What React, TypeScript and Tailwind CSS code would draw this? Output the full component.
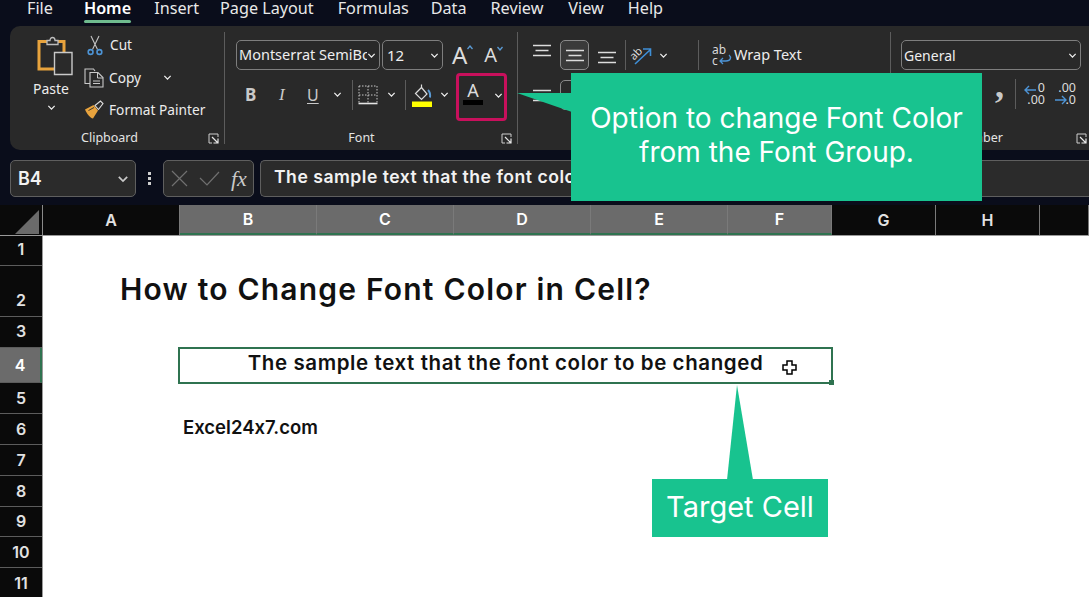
import React from "react";

const uiFont = { fontFamily: '"Noto Sans", "Open Sans", sans-serif' };

const Chevron = ({ size = 9, color = "#efefef" }: { size?: number; color?: string }) => (
  <svg width={size} height={size} viewBox="0 0 10 10" fill="none" className="shrink-0">
    <path d="M1.5 3.2 L5 6.8 L8.5 3.2" stroke={color} strokeWidth="1.4" />
  </svg>
);

const Launcher = () => (
  <svg width="11" height="11" viewBox="0 0 11 11" fill="none" className="shrink-0">
    <path d="M10 4V1H1V10H4" stroke="#cfcfcf" strokeWidth="1" />
    <path d="M4 4L9.5 9.5M5.5 10H10V5.5" stroke="#e8e8e8" strokeWidth="1.2" />
  </svg>
);

const PasteIcon = () => (
  <svg width="36" height="40" viewBox="0 0 36 40" fill="none">
    <path d="M2 5.5H27V33H2Z" stroke="#e8a33d" strokeWidth="3" fill="none" />
    <path d="M10 6.5V4.5H13C13 0.5 18 0.5 18 4.5H21V8.5H10Z" fill="#2a2a2a" stroke="#bdbdbd" strokeWidth="1.3" />
    <path d="M17.5 16.5H35V38.5H17.5Z" fill="#2a2a2a" stroke="#c9c9c9" strokeWidth="1.4" />
  </svg>
);

const CutIcon = () => (
  <svg width="16" height="21" viewBox="0 0 16 21" fill="none">
    <path d="M4 1L10.5 14.5M12 1L5.5 14.5" stroke="#c4c4c4" strokeWidth="1.1" />
    <circle cx="3.6" cy="17" r="2.4" stroke="#4d94d6" strokeWidth="1.6" />
    <circle cx="12.4" cy="17" r="2.4" stroke="#4d94d6" strokeWidth="1.6" />
  </svg>
);

const CopyIcon = () => (
  <svg width="20" height="20" viewBox="0 0 20 20" fill="none">
    <path d="M6 15.5H1V1H9.5L11 3" stroke="#c9c9c9" strokeWidth="1.1" />
    <path d="M6 4.5H14L19 9.5V19H6Z" stroke="#c9c9c9" strokeWidth="1.1" />
    <path d="M13.5 4.5V10H19M9 13H16M9 15.5H16" stroke="#c9c9c9" strokeWidth="1" />
  </svg>
);

const PainterIcon = () => (
  <svg width="20" height="20" viewBox="0 0 20 20" fill="none">
    <path d="M1 9.5L9.5 5L14 10.5L9 18.5C6 18 3 14 1 9.5Z" fill="#e8a33d" />
    <path d="M4.5 10.5L10 7.5" stroke="#2a2a2a" strokeWidth="0.9" />
    <path d="M11 5.5L16.5 1L19 3.5L14.5 9.5Z" fill="#2a2a2a" stroke="#dcdcdc" strokeWidth="1.1" />
  </svg>
);

const FillIcon = () => (
  <svg width="20" height="24" viewBox="0 0 20 24" fill="none">
    <path d="M3.5 10.5L9.5 4.5L15 11L9.5 16.5Z" stroke="#dcdcdc" strokeWidth="1.2" />
    <path d="M9.5 4.5V1.5" stroke="#dcdcdc" strokeWidth="1.2" />
    <path d="M16 7C18 9 18.5 11 18 14.5" stroke="#5b9bd5" strokeWidth="2" />
    <rect x="0" y="18.5" width="20" height="5.5" fill="#ffff00" />
  </svg>
);

const BordersIcon = () => (
  <svg width="20" height="20" viewBox="0 0 20 20" fill="none">
    <path d="M1 1H19M1 1V19M19 1V19M10 1V19M1 10H19" stroke="#c9c9c9" strokeWidth="1" strokeDasharray="1.5 1.5" />
    <path d="M0.5 18.5H19.5" stroke="#e4e4e4" strokeWidth="1.6" />
  </svg>
);

const LinesIcon = () => (
  <svg width="20" height="13" viewBox="0 0 20 13" fill="none">
    <path d="M1 1.5H19M3.5 6.5H16.5M1 11.5H19" stroke="#dcdcdc" strokeWidth="1.3" />
  </svg>
);

const OrientationIcon = () => (
  <svg width="22" height="22" viewBox="0 0 22 22" fill="none">
    <path d="M5 20L20 6M13 5H20.5V12" stroke="#3f8fd6" strokeWidth="1.6" />
    <text x="-1" y="13" fontSize="11" fill="#dcdcdc" transform="rotate(-45 6 9)" fontFamily="Noto Sans, sans-serif">ab</text>
  </svg>
);

const WrapIcon = () => (
  <svg width="20" height="22" viewBox="0 0 20 22" fill="none">
    <text x="0" y="10" fontSize="12" fill="#d8d8d8" fontFamily="Noto Sans, sans-serif">ab</text>
    <text x="0" y="21" fontSize="12" fill="#d8d8d8" fontFamily="Noto Sans, sans-serif">c</text>
    <path d="M17 11C19.5 13 19 17 14 17H8M11 14L8 17L11 20" stroke="#4d94d6" strokeWidth="1.3" />
  </svg>
);

const DecimalIcon = ({ up }: { up?: boolean }) => (
  <div className="relative flex h-[26px] w-[21px] flex-col items-end justify-center text-[12.5px] leading-[12px] text-[#dcdcdc]">
    <span>{up ? "0" : ".00"}</span>
    <span>{up ? ".00" : ".0"}</span>
    <svg width="12" height="10" viewBox="0 0 12 10" fill="none" className={`absolute ${up ? "left-0 top-[4px]" : "left-0 top-[14px]"}`}>
      <path d={up ? "M12 5H1M5 1L1 5L5 9" : "M0 5H11M7 1L11 5L7 9"} stroke="#4d94d6" strokeWidth="1.4" />
    </svg>
  </div>
);

const GroupLabel = ({ label, className }: { label: string; className: string }) => (
  <div className={`relative mt-auto flex h-[12px] items-center justify-center text-[12.5px] text-[#e4e4e4] ${className}`}>
    {label}
    <span className="absolute bottom-0 right-[-1px] flex"><Launcher /></span>
  </div>
);

const Select = ({ value, className }: { value: string; className: string }) => (
  <div className={`flex h-[30px] items-center overflow-hidden rounded-[5px] border border-[#7e7e7e] pl-[2px] pr-[3px] text-[#eeeeee] ${className}`}>
    <span className="flex-1 overflow-hidden whitespace-nowrap">{value}</span>
    <Chevron />
  </div>
);

const menu = [
  { label: "File", ml: "ml-[27px]" },
  { label: "Home", ml: "ml-[31px]", active: true },
  { label: "Insert", ml: "ml-[23px]" },
  { label: "Page Layout", ml: "ml-[21px]" },
  { label: "Formulas", ml: "ml-[24px]" },
  { label: "Data", ml: "ml-[22px]" },
  { label: "Review", ml: "ml-[24px]" },
  { label: "View", ml: "ml-[25px]" },
  { label: "Help", ml: "ml-[24px]" },
];

const columns = [
  { name: "A", w: "w-[137px]" },
  { name: "B", w: "w-[137px]", sel: true },
  { name: "C", w: "w-[137px]", sel: true },
  { name: "D", w: "w-[137px]", sel: true },
  { name: "E", w: "w-[137px]", sel: true },
  { name: "F", w: "w-[104px]", sel: true },
  { name: "G", w: "w-[104px]" },
  { name: "H", w: "w-[104px]" },
  { name: "", w: "w-[49px]" },
];

const rows = [
  { n: 1, h: "h-[30px] items-center pb-[3px]" },
  { n: 2, h: "h-[51px] items-end pb-[4px]" },
  { n: 3, h: "h-[31px] items-center pb-[2px]" },
  { n: 4, h: "h-[35px] items-center" },
  { n: 5, h: "h-[31px] items-center pb-[1px]" },
  { n: 6, h: "h-[31px] items-center pb-[1px]" },
  { n: 7, h: "h-[31px] items-center pb-[1px]" },
  { n: 8, h: "h-[31px] items-center pb-[1px]" },
  { n: 9, h: "h-[30px] items-center pb-[1px]" },
  { n: 10, h: "h-[31px] items-center pb-[1px]" },
  { n: 11, h: "h-[31px] items-center pb-[1px]" },
];

const sheetFont = { fontFamily: 'Inter, "Noto Sans", sans-serif' };

export default function App() {
  return (
    <div className="relative h-[597px] w-[1089px] overflow-hidden bg-[#0a0d1b]" style={uiFont}>
      {/* menu tabs */}
      <div className="flex h-[26px] items-start text-[16.2px] leading-[17px] text-[#e8e8e8]">
        {menu.map((m) => (
          <div key={m.label} className={`${m.ml} flex flex-col items-stretch whitespace-nowrap`}>
            <span className={m.active ? "font-semibold text-white" : ""}>{m.label}</span>
            {m.active && <span className="mt-[3px] h-[3px] rounded-sm bg-[#6fbb8e]" />}
          </div>
        ))}
      </div>

      {/* ribbon */}
      <div className="ml-[10px] flex h-[124px] rounded-l-[10px] bg-[#292929] text-[#ececec]">
        <div className="my-[6px] flex w-[215px] flex-col border-r border-[#5c5c5c] pr-[6px]">
          <div className="flex">
            <div className="ml-[27px] mt-[4px] flex w-[36px] flex-col items-start">
              <PasteIcon />
              <span className="ml-[-4px] mt-[4px] text-[14px] leading-[18px]">Paste</span>
              <span className="ml-[10px] mt-[5px]"><Chevron /></span>
            </div>
            <div className="ml-[11px] flex flex-col gap-[10.5px] pt-[2px] text-[13.7px] leading-[22px]">
              <div className="ml-[3px] flex items-center gap-[7px]"><CutIcon />Cut</div>
              <div className="flex items-center gap-[5px]"><CopyIcon />Copy<span className="ml-[17px]"><Chevron /></span></div>
              <div className="flex items-center gap-[5px]"><PainterIcon />Format Painter</div>
            </div>
          </div>
          <GroupLabel label="Clipboard" className="pr-[9px]" />
        </div>

        <div className="my-[6px] flex w-[293px] flex-col border-r border-[#5c5c5c] pl-[11px] pr-[6px]">
          <div className="mt-[8px] flex items-center">
            <Select value="Montserrat SemiBold" className="w-[144px] text-[14.5px]" />
            <Select value="12" className="ml-[2px] w-[61px] pl-[4px] text-[15px]" />
            <span className="ml-[9px] flex items-start text-[24px] leading-[28px] text-[#dcdcdc]">
              A
              <svg width="6" height="5" viewBox="0 0 6 5" fill="none" className="mt-[4px]"><path d="M0.5 4L3 1L5.5 4" stroke="#5b9bd5" strokeWidth="1.3" /></svg>
            </span>
            <span className="ml-[11px] flex items-start text-[20px] leading-[28px] text-[#dcdcdc]">
              A
              <svg width="6" height="5" viewBox="0 0 6 5" fill="none" className="mt-[5px]"><path d="M0.5 1L3 4L5.5 1" stroke="#5b9bd5" strokeWidth="1.3" /></svg>
            </span>
          </div>
          <div className="mt-[3px] flex h-[48px] items-center pb-[5px] text-[#c9c9c9]">
            <span className="ml-[9px] w-[10px] text-[17px] font-bold">B</span>
            <span className="ml-[24px] w-[8px] text-[17px] italic" style={{ fontFamily: '"Liberation Serif", serif' }}>I</span>
            <span className="ml-[20px] w-[12px] text-[16px] underline underline-offset-2">U</span>
            <span className="ml-[14px]"><Chevron /></span>
            <span className="ml-[10px] h-[30px] w-px bg-[#5c5c5c]" />
            <span className="ml-[5px]"><BordersIcon /></span>
            <span className="ml-[9px]"><Chevron /></span>
            <span className="ml-[9px] h-[30px] w-px bg-[#5c5c5c]" />
            <span className="ml-[6px]"><FillIcon /></span>
            <span className="ml-[8px]"><Chevron /></span>
            <div className="ml-[7px] flex h-[48px] w-[51px] shrink-0 items-center self-start rounded-[4px] border-[3px] border-[#c8105c] pl-[4px]">
              <div className="mb-[8px] flex w-[20px] flex-col items-center">
                <span className="text-[18px] leading-[19px] text-[#dcdcdc]">A</span>
                <span className="h-[5px] w-[20px] bg-black" />
              </div>
              <span className="mb-[4px] ml-[11px]"><Chevron /></span>
            </div>
          </div>
          <GroupLabel label="Font" className="pr-[24px]" />
        </div>

        <div className="my-[6px] flex w-[373px] flex-col border-r border-[#5c5c5c] pl-[14px]">
          <div className="mt-[8px] flex h-[30px] items-center">
            <span className="mt-[-10px]"><LinesIcon /></span>
            <span className="ml-[8px] flex h-[30px] w-[29px] items-center justify-center rounded-[5px] border border-[#8a8a8a] bg-[#3a3a3a]"><LinesIcon /></span>
            <span className="ml-[8px] mt-[4px]"><LinesIcon /></span>
            <span className="ml-[8px] h-[30px] w-px bg-[#5c5c5c]" />
            <span className="ml-[4px]"><OrientationIcon /></span>
            <span className="ml-[7px]"><Chevron /></span>
            <span className="ml-[30px] h-[30px] w-px bg-[#5c5c5c]" />
            <span className="ml-[13px]"><WrapIcon /></span>
            <span className="ml-[2px] text-[14.5px]">Wrap Text</span>
          </div>
          <div className="mt-[10px] flex h-[30px] items-center">
            <LinesIcon />
            <span className="ml-[8px] h-[30px] w-[29px] rounded-[5px] border border-[#8a8a8a]" />
          </div>
        </div>

        <div className="my-[6px] flex flex-1 flex-col pl-[10px] pr-[3px]">
          <div className="mt-[8px]">
            <Select value="General" className="w-[180px] text-[14px]" />
          </div>
          <div className="mt-[6px] flex h-[36px] items-center justify-end pr-[10px]">
            <span className="mb-[18px] text-[36px] font-bold leading-[30px] text-[#c9c9c9]" style={{ fontFamily: '"Liberation Serif", serif' }}>,</span>
            <span className="ml-[11px] h-[30px] w-px bg-[#5c5c5c]" />
            <span className="ml-[8px]"><DecimalIcon up /></span>
            <span className="ml-[10px]"><DecimalIcon /></span>
          </div>
          <GroupLabel label="Number" className="pr-[30px]" />
        </div>
      </div>

      {/* formula bar */}
      <div className="mt-[10px] flex h-[37px] items-stretch" style={sheetFont}>
        <div className="ml-[10px] flex w-[126px] items-center justify-between rounded-[5px] border border-[#5f5f5f] bg-[#2b2b2b] pl-[7px] pr-[6px] text-[18px] font-semibold text-[#f2f2f2]">
          B4
          <Chevron size={12} color="#c9c9c9" />
        </div>
        <div className="ml-[11px] flex w-[5px] flex-col items-center justify-center gap-[2px]">
          <span className="h-[3px] w-[3px] bg-[#cfcfcf]" />
          <span className="h-[3px] w-[3px] bg-[#cfcfcf]" />
          <span className="h-[3px] w-[3px] bg-[#cfcfcf]" />
        </div>
        <div className="ml-[11px] flex w-[91px] items-center rounded-[5px] border border-[#5f5f5f] bg-[#2b2b2b] pl-[7px]">
          <svg width="17" height="17" viewBox="0 0 17 17" fill="none"><path d="M1 1L16 16M16 1L1 16" stroke="#707070" strokeWidth="1.2" /></svg>
          <svg width="21" height="17" viewBox="0 0 21 17" fill="none" className="ml-[11px]"><path d="M1 8L8 15L20 2" stroke="#707070" strokeWidth="1.2" /></svg>
          <span className="ml-[11px] text-[22px] italic text-[#c9c9c9]" style={{ fontFamily: '"Liberation Serif", serif' }}>fx</span>
        </div>
        <div className="ml-[6px] flex flex-1 items-center overflow-hidden whitespace-nowrap rounded-l-[5px] border-y border-l border-[#5f5f5f] bg-[#2b2b2b] pb-[2px] pl-[13px] text-[17.6px] font-semibold tracking-[0.5px] text-[#f2f2f2]">
          The sample text that the font color to be changed
        </div>
      </div>

      {/* column headers */}
      <div className="mt-[8px] flex h-[31px] border-b border-[#9a9a9a] bg-[#0a0a0a] text-[16px] font-semibold text-[#e2e2e2]" style={sheetFont}>
        <div className="flex w-[43px] items-end justify-end border-r border-[#8a8a8a] pb-[1px] pr-[3px]">
          <svg width="24" height="24" viewBox="0 0 24 24"><path d="M24 0V24H0Z" fill="#6b6b6b" /></svg>
        </div>
        {columns.map((c) => (
          <div
            key={c.name || "rest"}
            className={`flex ${c.w} items-center justify-center border-r border-[#7a7a7a] pb-[1px] ${c.sel ? "border-b-2 border-b-[#2f7350] bg-[#6b6b6b] text-white" : ""}`}
          >
            {c.name}
          </div>
        ))}
      </div>

      {/* sheet */}
      <div className="flex" style={sheetFont}>
        <div className="w-[43px] shrink-0 border-r border-[#9a9a9a] bg-[#0a0a0a]">
          {rows.map((r) => (
            <div
              key={r.n}
              className={`flex ${r.h} justify-center border-b border-[#5c5c5c] text-[16px] font-semibold text-[#e2e2e2] ${r.n === 4 ? "border-r-2 border-r-[#2f7350] bg-[#6b6b6b] text-white" : ""}`}
            >
              {r.n}
            </div>
          ))}
        </div>
        <div className="flex-1 bg-white text-black">
          <div className="h-[30px]" />
          <div className="flex h-[51px] items-center pb-[5px] pl-[77px] text-[30px] font-semibold tracking-[1.2px] text-[#111111]">
            How to Change Font Color in Cell?
          </div>
          <div className="h-[30px]" />
          <div className="relative ml-[135px] flex h-[37px] w-[655px] items-start justify-center border-2 border-[#2f7350] text-[20.5px] font-semibold leading-[28px] tracking-[0.6px] text-[#111111]">
            The sample text that the font color to be changed
            <span className="absolute bottom-[-3px] right-[-3px] h-[5px] w-[5px] bg-[#2f7350]" />
            <svg width="15" height="15" viewBox="0 0 15 15" className="absolute right-[34px] top-[11px]">
              <path d="M5 1H10V5H14V10H10V14H5V10H1V5H5Z" fill="#fff" stroke="#000" strokeWidth="1.5" />
            </svg>
          </div>
          <div className="h-[31px]" />
          <div className="flex h-[31px] items-center pb-[6px] pl-[140px] text-[18.5px] font-semibold text-[#111111] [font-feature-settings:'calt'_0]">Excel24x7.com</div>
        </div>
      </div>

      {/* callouts */}
      <div className="absolute left-[571px] top-[73px] flex h-[128px] w-[411px] flex-col items-center bg-[#18c38f] pt-[28px] text-[28px] leading-[34px] text-white" style={sheetFont}>
        <svg width="55" height="19" viewBox="0 0 55 19" className="absolute left-[-54px] top-[20px]"><path d="M0 0H55V19Z" fill="#18c38f" /></svg>
        <span className="whitespace-nowrap">Option to change Font Color</span>
        <span className="whitespace-nowrap">from the Font Group.</span>
      </div>
      <div className="absolute left-[652px] top-[479px] flex h-[58px] w-[176px] items-center justify-center bg-[#18c38f] pb-[3px] text-[29px] text-white" style={sheetFont}>
        <svg width="26" height="95" viewBox="0 0 26 95" className="absolute left-[75px] top-[-94px]"><path d="M10 0L26 95H0Z" fill="#18c38f" /></svg>
        Target Cell
      </div>
    </div>
  );
}
